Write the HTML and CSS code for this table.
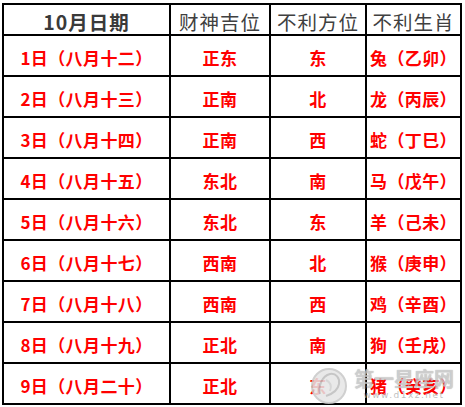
FILE: index.html
```html
<!DOCTYPE html>
<html lang="zh">
<head>
<meta charset="utf-8">
<link rel="stylesheet" href="styles.css">
</head>
<body>
<div class="wrap">
  <div class="table">
    <div class="cell head date">10月日期</div>
    <div class="cell head">财神吉位</div>
    <div class="cell head">不利方位</div>
    <div class="cell head">不利生肖</div>

    <div class="cell">1日（八月十二）</div><div class="cell">正东</div><div class="cell">东</div><div class="cell">兔（乙卯）</div>
    <div class="cell">2日（八月十三）</div><div class="cell">正南</div><div class="cell">北</div><div class="cell">龙（丙辰）</div>
    <div class="cell">3日（八月十四）</div><div class="cell">正南</div><div class="cell">西</div><div class="cell">蛇（丁巳）</div>
    <div class="cell">4日（八月十五）</div><div class="cell">东北</div><div class="cell">南</div><div class="cell">马（戊午）</div>
    <div class="cell">5日（八月十六）</div><div class="cell">东北</div><div class="cell">东</div><div class="cell">羊（己未）</div>
    <div class="cell">6日（八月十七）</div><div class="cell">西南</div><div class="cell">北</div><div class="cell">猴（庚申）</div>
    <div class="cell">7日（八月十八）</div><div class="cell">西南</div><div class="cell">西</div><div class="cell">鸡（辛酉）</div>
    <div class="cell">8日（八月十九）</div><div class="cell">正北</div><div class="cell">南</div><div class="cell">狗（壬戌）</div>
    <div class="cell">9日（八月二十）</div><div class="cell">正北</div><div class="cell">东</div><div class="cell">猪（癸亥）</div>
  </div>
  <div class="watermark">
    <svg class="wm-logo" width="46" height="40" viewBox="0 0 46 40">
      <circle cx="23" cy="22" r="17" fill="#e6e6e6" stroke="#c8c8c8" stroke-width="2"/>
      <path d="M14 30 C12 22 16 12 24 10 C30 9 34 14 33 20 C32 26 26 30 20 32" fill="none" stroke="#bdbdbd" stroke-width="2"/>
      <path d="M20 16 C24 18 26 22 24 27" fill="none" stroke="#cfcfcf" stroke-width="2"/>
    </svg>
    <div class="wm-text">
      <span class="wm-name">第一星座网</span>
      <span class="wm-url">www.d1xz.net</span>
    </div>
  </div>
</div>
</body>
</html>
```
FILE: styles.css
```css
html, body {
  margin: 0;
  padding: 0;
  background: #ffffff;
}

.wrap {
  position: relative;
  padding: 3px 0 0 2px;
  width: 465px;
  height: 407px;
  box-sizing: border-box;
  overflow: hidden;
}

.table {
  display: grid;
  grid-template-columns: 165px 98px 94px 93px;
  grid-template-rows: 29px repeat(9, 39px);
  gap: 2px;
  padding: 2px;
  background: #000000;
  width: max-content;
}

.cell {
  background: #ffffff;
  display: flex;
  align-items: center;
  justify-content: center;
  padding-top: 3px;
  box-sizing: border-box;
  font-family: "Noto Sans CJK SC", "Noto Sans", sans-serif;
  font-size: 17px;
  font-weight: 700;
  color: #ff0000;
  letter-spacing: 0.4px;
  white-space: nowrap;
}

.head {
  font-size: 19.5px;
  font-weight: 400;
  color: #404040;
  letter-spacing: 1px;
  padding-top: 4px;
}

.head.date {
  font-weight: 700;
  color: #3a3a3a;
}

.watermark {
  position: absolute;
  left: 306px;
  top: 364px;
  display: flex;
  align-items: center;
  gap: 2px;
  opacity: 0.85;
  pointer-events: none;
}

.wm-text {
  display: flex;
  flex-direction: column;
  align-items: center;
  line-height: 1;
}

.wm-name {
  font-family: "Noto Sans CJK SC", sans-serif;
  font-size: 20px;
  font-weight: 700;
  color: rgba(210, 210, 210, 0.75);
  text-shadow: 0 0 1px #9a9a9a;
  letter-spacing: 0;
}

.wm-url {
  font-family: "DejaVu Sans", sans-serif;
  font-size: 9px;
  color: rgba(170, 170, 170, 0.9);
  letter-spacing: 1.5px;
  margin-top: 2px;
}
```
